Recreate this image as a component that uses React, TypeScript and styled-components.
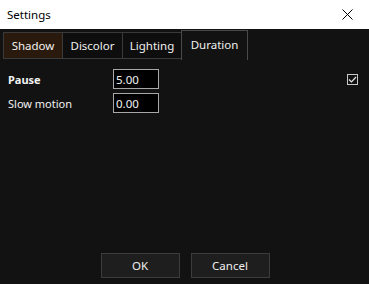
import React, { useState } from "react";
import styled, { createGlobalStyle } from "styled-components";

const Global = createGlobalStyle`
  html, body { margin: 0; padding: 0; background: #121212; }
  body { font-family: "Noto Sans", "Open Sans", sans-serif; font-size: 11px; }
  * { box-sizing: border-box; }
`;

const Window = styled.div`
  width: 369px;
  height: 284px;
  display: flex;
  flex-direction: column;
  background: #121212;
  overflow: hidden;
`;

const TitleBar = styled.div`
  height: 29px;
  background: #ffffff;
  display: flex;
  align-items: center;
  justify-content: space-between;
  padding: 0 0 0 7px;
  color: #000;
  font-size: 11.5px;
`;

const CloseButton = styled.div`
  width: 46px;
  height: 29px;
  display: flex;
  align-items: center;
  justify-content: center;
  padding-left: 2px;
`;

const Body = styled.div`
  flex: 1;
  display: flex;
  flex-direction: column;
`;

const TabRow = styled.div`
  display: flex;
  align-items: flex-start;
  padding: 0 0 0 4px;
  height: 31px;
`;

const Tab = styled.div<{ $active?: boolean; $tint?: boolean; $w: number }>`
  width: ${(p) => p.$w}px;
  margin-top: ${(p) => (p.$active ? "1px" : "3px")};
  height: ${(p) => (p.$active ? "30px" : "27px")};
  display: flex;
  align-items: center;
  justify-content: center;
  padding-bottom: ${(p) => (p.$active ? "2px" : "0")};
  color: #f0f0f0;
  font-size: 11.5px;
  border: 1px solid ${(p) => (p.$active ? "#4a4a4a" : "#3a3a3a")};
  border-bottom: ${(p) => (p.$active ? "none" : "1px solid #3a3a3a")};
  margin-left: -1px;
  background: ${(p) => (p.$tint ? "#2a1a0e" : p.$active ? "#121212" : "#0e0e0e")};
`;

const Content = styled.div`
  padding: 9px 8px 0 8px;
  display: flex;
  flex-direction: column;
  gap: 4px;
  flex: 1;
`;

const Row = styled.div`
  display: flex;
  align-items: center;
  height: 20px;
`;

const Label = styled.div<{ $bold?: boolean }>`
  width: 105px;
  color: #f2f2f2;
  font-weight: ${(p) => (p.$bold ? 700 : 400)};
  font-size: 11px;
`;

const Input = styled.div`
  width: 46px;
  height: 20px;
  border: 1px solid #a8a8a8;
  background: #000;
  color: #f2f2f2;
  font-size: 11.5px;
  padding: 0 2px;
  display: flex;
  align-items: center;
`;

const Spacer = styled.div`
  flex: 1;
`;

const Check = styled.div`
  width: 11px;
  height: 11px;
  border: 1px solid #c8c8c8;
  display: flex;
  align-items: center;
  justify-content: center;
  margin-right: 3px;
`;

const Footer = styled.div`
  display: flex;
  justify-content: center;
  gap: 11px;
  padding: 0 0 6px 1px;
`;

const Button = styled.div`
  width: 79px;
  height: 25px;
  background: #1e1e1e;
  border: 1px solid #3c3c3c;
  color: #f0f0f0;
  display: flex;
  align-items: center;
  justify-content: center;
  font-size: 11.5px;
`;

export default function App() {
  const [checked] = useState(true);
  return (
    <Window>
      <Global />
      <TitleBar>
        <span>Settings</span>
        <CloseButton>
          <svg width="11" height="11" viewBox="0 0 11 11">
            <path d="M0.5 0.5 L10.5 10.5 M10.5 0.5 L0.5 10.5" stroke="#000" strokeWidth="1" />
          </svg>
        </CloseButton>
      </TitleBar>
      <Body>
        <TabRow>
          <Tab $tint $w={60}>Shadow</Tab>
          <Tab $w={61}>Discolor</Tab>
          <Tab $w={60}>Lighting</Tab>
          <Tab $active $w={67}>Duration</Tab>
        </TabRow>
        <Content>
          <Row>
            <Label $bold>Pause</Label>
            <Input>5.00</Input>
            <Spacer />
            {checked && (
              <Check>
                <svg width="9" height="9" viewBox="0 0 9 9">
                  <path d="M1 4.5 L3.5 7 L8 2" stroke="#e8e8e8" strokeWidth="1.2" fill="none" />
                </svg>
              </Check>
            )}
          </Row>
          <Row>
            <Label>Slow motion</Label>
            <Input>0.00</Input>
          </Row>
        </Content>
        <Footer>
          <Button>OK</Button>
          <Button>Cancel</Button>
        </Footer>
      </Body>
    </Window>
  );
}
